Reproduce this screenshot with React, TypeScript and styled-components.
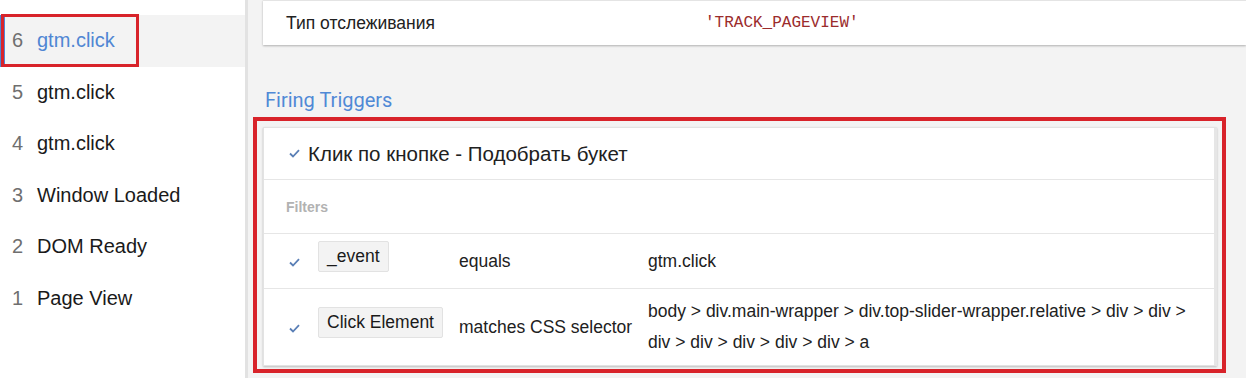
import React from 'react';
import styled, { createGlobalStyle } from 'styled-components';

const GlobalStyle = createGlobalStyle`
  html, body {
    margin: 0;
    padding: 0;
    background: #f3f3f3;
    font-family: "Liberation Sans", Arial, sans-serif;
    color: #212121;
  }
  * { box-sizing: border-box; }
`;

const Page = styled.div`
  display: flex;
  width: 1246px;
  height: 378px;
  overflow: hidden;
`;

const Sidebar = styled.div`
  position: relative;
  flex: 0 0 248px;
  background: #fff;
  border-right: 3px solid #e2e2e2;
  padding-top: 15px;
`;

const EventRow = styled.div<{ $active?: boolean }>`
  display: flex;
  align-items: center;
  height: 51.5px;
  padding-left: 12px;
  font-size: 20px;
  background: ${(p) => (p.$active ? '#f3f3f3' : 'transparent')};
  box-shadow: ${(p) => (p.$active ? 'inset 5px 0 0 #4f86d3' : 'none')};

  .num {
    width: 25px;
    color: #6f6f6f;
  }
  .name {
    color: ${(p) => (p.$active ? '#4f86d3' : '#1a1a1a')};
  }
`;

const Mark = styled.div<{ $width: string }>`
  position: absolute;
  border: ${(p) => p.$width} solid #d8232a;
  pointer-events: none;
`;

const Main = styled.div`
  flex: 1;
  padding-left: 15px;
  background: #f3f3f3;
`;

const VarCard = styled.div`
  display: flex;
  align-items: center;
  height: 45px;
  background: #fff;
  border-top: 1px solid #e4e4e4;
  box-shadow: 0 1px 2px rgba(0, 0, 0, 0.28);
  font-size: 17.5px;

  .label {
    width: 442px;
    padding-left: 23px;
  }
  .value {
    font-family: "Liberation Mono", "Courier New", monospace;
    font-size: 16px;
    color: #9b2c2c;
  }
`;

const SectionTitle = styled.div`
  margin: 43px 0 15px 2px;
  line-height: 24px;
  font-family: Roboto, "Liberation Sans", sans-serif;
  font-size: 20px;
  color: #5089d6;
`;

const TriggerWrap = styled.div`
  position: relative;
  margin-right: 29px;
`;

const TriggerCard = styled.div`
  background: #fff;
  border: 1px solid #e3e3e3;
  border-right: 3px solid #e6e6e6;
  box-shadow: 0 1px 2px rgba(0, 0, 0, 0.22);
`;

const TriggerHead = styled.div`
  display: flex;
  align-items: center;
  height: 52px;
  padding-left: 25px;
  gap: 8px;
  font-size: 20.5px;
  border-bottom: 1px solid #e6e6e6;
`;

const FiltersLabel = styled.div`
  display: flex;
  align-items: center;
  height: 54px;
  padding-left: 22px;
  font-size: 14px;
  font-weight: bold;
  color: #b2b2b2;
  border-bottom: 1px solid #e6e6e6;
`;

const FilterRow = styled.div<{ $last?: boolean }>`
  display: grid;
  grid-template-columns: 54px 141px 189px 1fr;
  align-items: center;
  min-height: 54px;
  padding: 7px 20px 7px 0;
  font-size: 17.5px;
  border-bottom: ${(p) => (p.$last ? 'none' : '1px solid #e6e6e6')};
`;

const CheckCell = styled.div`
  display: flex;
  padding-left: 25px;
  padding-top: 2px;
`;

const Chip = styled.div`
  justify-self: start;
  margin-bottom: 9px;
  padding: 0 8px;
  height: 31px;
  line-height: 29px;
  background: #f3f3f3;
  border: 1px solid #e2e2e2;
  border-radius: 2px;
  color: #1a1a1a;
`;

const Value = styled.div`
  line-height: 31px;
`;

const Check = () => (
  <svg width="11" height="9" viewBox="0 0 11 9">
    <polyline
      points="1,4.5 4,7.5 10,1.2"
      fill="none"
      stroke="#5a7fb6"
      strokeWidth="1.8"
    />
  </svg>
);

const events = [
  { n: 6, name: 'gtm.click', active: true },
  { n: 5, name: 'gtm.click' },
  { n: 4, name: 'gtm.click' },
  { n: 3, name: 'Window Loaded' },
  { n: 2, name: 'DOM Ready' },
  { n: 1, name: 'Page View' },
];

const filters = [
  { variable: '_event', op: 'equals', value: 'gtm.click' },
  {
    variable: 'Click Element',
    op: 'matches CSS selector',
    value:
      'body > div.main-wrapper > div.top-slider-wrapper.relative > div > div > div > div > div > div > div > a',
  },
];

export default function App() {
  return (
    <Page>
      <GlobalStyle />
      <Sidebar>
        {events.map((e) => (
          <EventRow key={e.n} $active={e.active}>
            <span className="num">{e.n}</span>
            <span className="name">{e.name}</span>
          </EventRow>
        ))}
        <Mark $width="3px" style={{ left: 1, top: 14, width: 138, height: 53 }} />
      </Sidebar>
      <Main>
        <VarCard>
          <span className="label">Тип отслеживания</span>
          <span className="value">'TRACK_PAGEVIEW'</span>
        </VarCard>
        <SectionTitle>Firing Triggers</SectionTitle>
        <TriggerWrap>
          <TriggerCard>
            <TriggerHead>
              <Check />
              <span>Клик по кнопке - Подобрать букет</span>
            </TriggerHead>
            <FiltersLabel>Filters</FiltersLabel>
            {filters.map((f, i) => (
              <FilterRow key={f.variable} $last={i === filters.length - 1}>
                <CheckCell>
                  <Check />
                </CheckCell>
                <Chip>{f.variable}</Chip>
                <div>{f.op}</div>
                <Value>{f.value}</Value>
              </FilterRow>
            ))}
          </TriggerCard>
          <Mark $width="4px" style={{ left: -10, top: -10, right: -9, bottom: -7 }} />
        </TriggerWrap>
      </Main>
    </Page>
  );
}
